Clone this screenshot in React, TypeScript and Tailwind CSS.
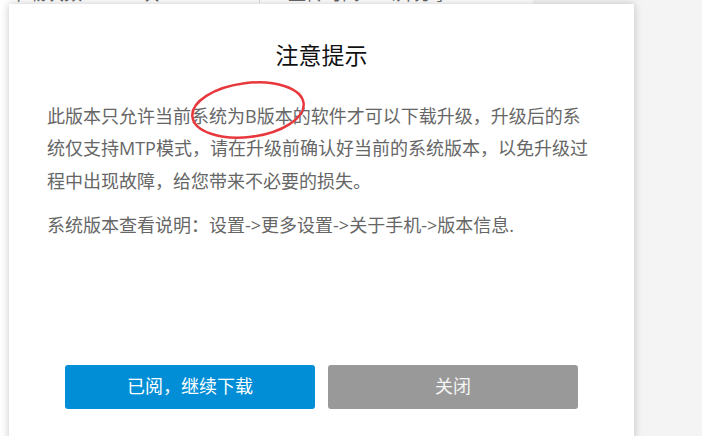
import React from 'react';

const font = { fontFamily: '"Open Sans", "Noto Sans CJK SC", sans-serif' };

// Page behind the dialog: only the bottom edge of one info row shows
const BackPage = () => (
  <div className="absolute inset-0 flex">
    <div className="w-[533px] h-full bg-white">
      <div className="flex h-[20px] -mt-[17px] text-[18px] leading-[20px] text-[#666]">
        <div className="w-[260px] pl-[10px] border-r border-[#ddd]">下载次数：1000次</div>
        <div className="pl-[28px]">上传时间：公开分享</div>
      </div>
    </div>
    <div className="flex-1 h-full bg-[#f4f4f4]"></div>
  </div>
);

const Notice = () => (
  <div className="absolute left-[9px] top-[4px] w-[625px] h-[470px] bg-white shadow-[0_0_8px_rgba(0,0,0,0.22)] pt-[35px] px-[38px]">
    <h2 className="text-center text-[23px] leading-[32px] text-[#111]">注意提示</h2>
    <div className="relative mt-[29px] text-[18px] leading-[32.4px] text-[#666]">
      <p>
        此版本只允许当前系统为B版本的软件才可以下载升级，升级后的系统仅支持MTP模式，请在升级前确认好当前的系统版本，以免升级过程中出现故障，给您带来不必要的损失。
      </p>
      <p className="mt-[12px]">系统版本查看说明：设置-&gt;更多设置-&gt;关于手机-&gt;版本信息.</p>
      {/* red hand-drawn mark over the text */}
      <svg className="absolute left-[137px] top-[-25px] pointer-events-none" width="128" height="70" viewBox="0 0 128 70">
        <ellipse cx="64" cy="35" rx="56" ry="27" transform="rotate(-7 64 35)" fill="none" stroke="#e8383d" strokeWidth="2.5" />
      </svg>
    </div>
    <div className="flex justify-center gap-[13px] mt-[123px]">
      <button className="w-[250px] h-[44px] rounded-[3px] bg-[#028ed6] text-white text-[18px]">已阅，继续下载</button>
      <button className="w-[250px] h-[44px] rounded-[3px] bg-[#999999] text-[#f4f4f4] text-[18px]">关闭</button>
    </div>
  </div>
);

export default function App() {
  return (
    <div className="relative w-[702px] h-[436px] overflow-hidden" style={font}>
      <BackPage />
      <Notice />
    </div>
  );
}
